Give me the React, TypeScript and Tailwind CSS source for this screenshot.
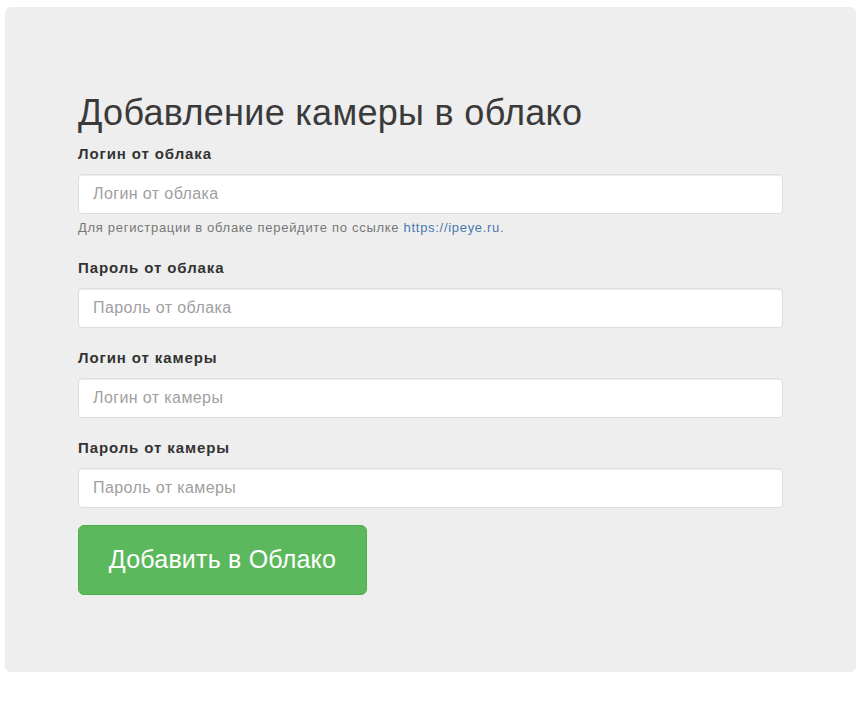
import React from "react";

const fields = [
  { label: "Логин от облака", placeholder: "Логин от облака", help: true },
  { label: "Пароль от облака", placeholder: "Пароль от облака" },
  { label: "Логин от камеры", placeholder: "Логин от камеры" },
  { label: "Пароль от камеры", placeholder: "Пароль от камеры" },
];

export default function App() {
  return (
    <div className="w-[860px] h-[704px] bg-white pt-[7px] pl-[5px]" style={{ fontFamily: '"Liberation Sans", Arial, sans-serif' }}>
      <div className="w-[851px] h-[665px] bg-[#eeeeee] rounded-[6px] pl-[73px] pr-[73px] pt-[84px]">
        <h1 className="text-[36px] leading-[44px] text-[#3a3a3a] font-normal tracking-[0.3px]">Добавление камеры в облако</h1>
        <form className="mt-[9px] w-[705px]">
          {fields.map((f, i) => (
            <div key={i} className={i === 0 ? "" : i === 1 ? "mt-[22px]" : "mt-[20px]"}>
              <label className="block text-[15px] leading-[20px] font-bold text-[#333333] tracking-[0.9px] mb-[10px]">{f.label}</label>
              <input
                className="block w-full h-[40px] rounded-[4px] bg-white border border-[#dddddd] shadow-[inset_0_1px_1px_rgba(0,0,0,0.075)] px-[14px] text-[16px] tracking-[0.4px] text-[#555555] placeholder:text-[#a0a0a0] outline-none"
                placeholder={f.placeholder}
              />
              {f.help && (
                <p className="mt-[6px] text-[13px] leading-[16px] tracking-[0.7px] text-[#777777]">
                  Для регистрации в облаке перейдите по ссылке <a className="text-[#4a78b0]">https://ipeye.ru</a>.
                </p>
              )}
            </div>
          ))}
          <button
            type="button"
            className="mt-[17px] w-[289px] h-[70px] rounded-[6px] bg-[#5cb85c] border border-[#4cae4c] text-white text-[25px] tracking-[0.2px] flex items-center justify-center"
          >
            Добавить в Облако
          </button>
        </form>
      </div>
    </div>
  );
}
